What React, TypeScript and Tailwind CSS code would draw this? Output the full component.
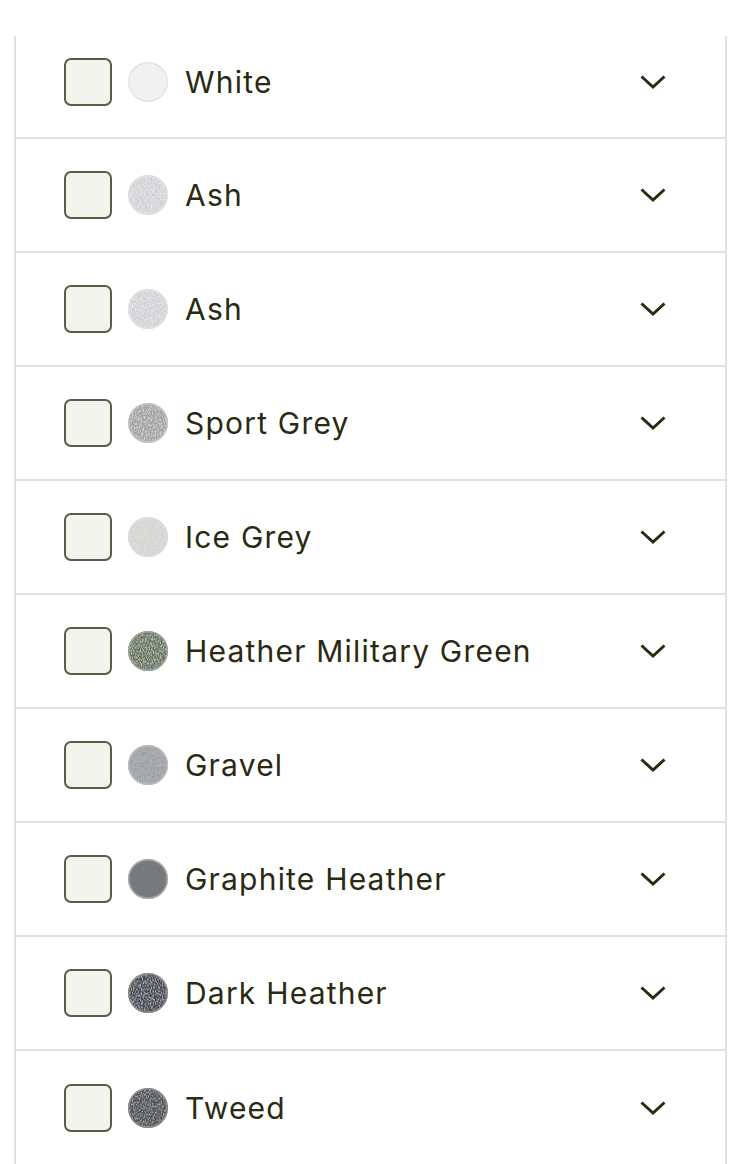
import React from "react";

type Sw = { name: string; base: string; ring: string; tex: number };

const items: Sw[] = [
  { name: "White", base: "#efefef", ring: "#e6e6e6", tex: 0.6 },
  { name: "Ash", base: "#cfd0d3", ring: "#e0e0e0", tex: 1.0 },
  { name: "Ash", base: "#cfd0d3", ring: "#e0e0e0", tex: 1.0 },
  { name: "Sport Grey", base: "#a0a0a2", ring: "#c4c4c4", tex: 1.0 },
  { name: "Ice Grey", base: "#d5d5d3", ring: "#dcdcda", tex: 0.45 },
  { name: "Heather Military Green", base: "#66725f", ring: "#9aa299", tex: 1.0 },
  { name: "Gravel", base: "#9da1a5", ring: "#b8babc", tex: 0.45 },
  { name: "Graphite Heather", base: "#74787b", ring: "#a9a9a9", tex: 0.1 },
  { name: "Dark Heather", base: "#464952", ring: "#8a8a8a", tex: 1.0 },
  { name: "Tweed", base: "#505358", ring: "#8c8c8c", tex: 0.8 },
];

function Swatch({ s, i }: { s: Sw; i: number }) {
  const id = `sw${i}`;
  return (
    <svg width="40" height="40" viewBox="0 0 40 40" className="shrink-0">
      <defs>
        <filter id={`f${id}`} x="0" y="0" width="100%" height="100%">
          <feTurbulence type="fractalNoise" baseFrequency="1.1 0.5" numOctaves="2" seed={i + 3} result="n" />
          <feColorMatrix
            in="n"
            type="matrix"
            values={`0 0 0 0 1  0 0 0 0 1  0 0 0 0 1  0 0 0 ${s.tex * 2.6} ${-s.tex * 1.0}`}
          />
        </filter>
        <clipPath id={`c${id}`}>
          <circle cx="20" cy="20" r="19.5" />
        </clipPath>
      </defs>
      <circle cx="20" cy="20" r="20" fill={s.ring} />
      <circle cx="20" cy="20" r="18.8" fill={s.base} />
      <g clipPath={`url(#c${id})`}>
        <rect x="0" y="0" width="40" height="40" filter={`url(#f${id})`} opacity="0.6" />
      </g>
      <circle cx="20" cy="20" r="19.3" fill="none" stroke={s.ring} strokeWidth="1.4" />
    </svg>
  );
}

function Chevron() {
  return (
    <svg width="28" height="16" viewBox="0 0 28 16" className="shrink-0">
      <polyline points="2.5,2.5 14,13 25.5,2.5" fill="none" stroke="#2a2a12" strokeWidth="3" />
    </svg>
  );
}

export default function App() {
  return (
    <div className="w-[738px] h-[1164px] overflow-hidden bg-white pt-[36px] pl-[14px]" style={{ fontFamily: "Inter, 'Noto Sans', sans-serif" }}>
      <div className="w-[713px] border-x-2 border-[#e2e2dc]">
        {items.map((s, i) => (
          <div
            key={i}
            className={`flex items-center border-[#e2e2dc] pl-[48px] pr-[58px] ${i === items.length - 1 ? "" : "border-b-2"} ${i === 0 ? "h-[103px] pb-[10px]" : "h-[114px]"}`}
          >
            <div className="w-[48px] h-[48px] rounded-[7px] border-2 border-[#5c5c46] bg-[#f3f4ee] shrink-0" />
            <div className="ml-[16px]">
              <Swatch s={s} i={i} />
            </div>
            <span className="ml-[17px] text-[30px] leading-none text-[#2a2a12] tracking-[0.04em]">{s.name}</span>
            <div className="ml-auto">
              <Chevron />
            </div>
          </div>
        ))}
      </div>
    </div>
  );
}
